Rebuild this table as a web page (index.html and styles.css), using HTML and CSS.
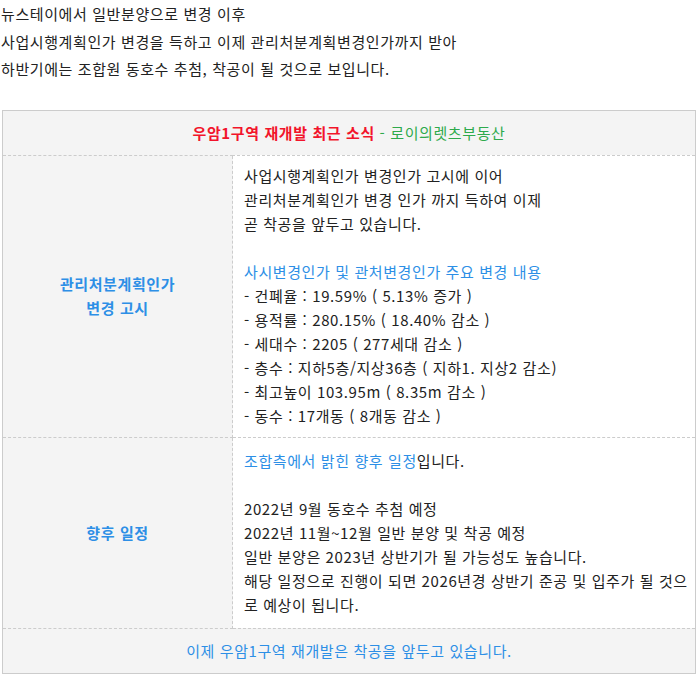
FILE: index.html
```html
<!DOCTYPE html>
<html lang="ko">
<head>
<meta charset="utf-8">
<link rel="stylesheet" href="styles.css">
</head>
<body>
<div class="page">
  <p class="intro">뉴스테이에서 일반분양으로 변경 이후<br>사업시행계획인가 변경을 득하고 이제 관리처분계획변경인가까지 받아<br>하반기에는 조합원 동호수 추첨, 착공이 될 것으로 보입니다.</p>
  <table class="news">
    <tr>
      <th colspan="2" class="head"><span class="red">우암1구역 재개발 최근 소식</span><span class="green"> - 로이의렛츠부동산</span></th>
    </tr>
    <tr>
      <td class="label">관리처분계획인가<br>변경 고시</td>
      <td class="body first">사업시행계획인가 변경인가 고시에 이어<br>관리처분계획인가 변경 인가 까지 득하여 이제<br>곧 착공을 앞두고 있습니다.<br><br><span class="blue">사시변경인가 및 관처변경인가 주요 변경 내용</span><br>- 건폐율 : 19.59% ( 5.13% 증가 )<br>- 용적률 : 280.15% ( 18.40% 감소 )<br>- 세대수 : 2205 ( 277세대 감소 )<br>- 층수 : 지하5층/지상36층 ( 지하1. 지상2 감소)<br>- 최고높이 103.95m ( 8.35m 감소 )<br>- 동수 : 17개동 ( 8개동 감소 )</td>
    </tr>
    <tr>
      <td class="label">향후 일정</td>
      <td class="body second"><span class="blue">조합측에서 밝힌 향후 일정</span>입니다.<br><br>2022년 9월 동호수 추첨 예정<br>2022년 11월~12월 일반 분양 및 착공 예정<br>일반 분양은 2023년 상반기가 될 가능성도 높습니다.<br>해당 일정으로 진행이 되면 2026년경 상반기 준공 및 입주가 될 것으로 예상이 됩니다.</td>
    </tr>
    <tr>
      <td colspan="2" class="foot">이제 우암1구역 재개발은 착공을 앞두고 있습니다.</td>
    </tr>
  </table>
</div>
</body>
</html>
```
FILE: styles.css
```css
html, body {
  margin: 0;
  padding: 0;
  background: #ffffff;
}
body {
  font-family: "Noto Sans CJK KR", "Noto Sans", sans-serif;
  font-size: 15px;
  letter-spacing: 0.6px;
  color: #222222;
}
.page {
  padding: 0 2px 0 1px;
}
.intro {
  margin: 0;
  line-height: 27.5px;
}
.news {
  margin-top: 27px;
  margin-left: 1px;
  width: 694px;
  border-collapse: collapse;
  border: 1px solid #cccccc;
  line-height: 24px;
}
.news th, .news td {
  border: 1px dashed #cccccc;
}
.head {
  background: #f4f4f4;
  padding: 10px;
  text-align: center;
  font-weight: normal;
}
.red {
  color: #f2142b;
  font-weight: bold;
}
.green {
  color: #2eaa4c;
}
.blue {
  color: #2d8fe6;
}
.label {
  width: 209px;
  background: #f4f4f4;
  padding: 10px;
  text-align: center;
  vertical-align: middle;
  color: #2d8fe6;
  font-weight: bold;
}
.body {
  padding: 10px 4px 10px 11px;
  vertical-align: top;
  word-break: break-all;
}
.body.first {
  padding-top: 8px;
  padding-bottom: 9px;
}
.body.second {
  padding-top: 11px;
  padding-bottom: 11px;
}
.foot {
  background: #f4f4f4;
  padding: 10px;
  text-align: center;
  color: #2d8fe6;
}
```
